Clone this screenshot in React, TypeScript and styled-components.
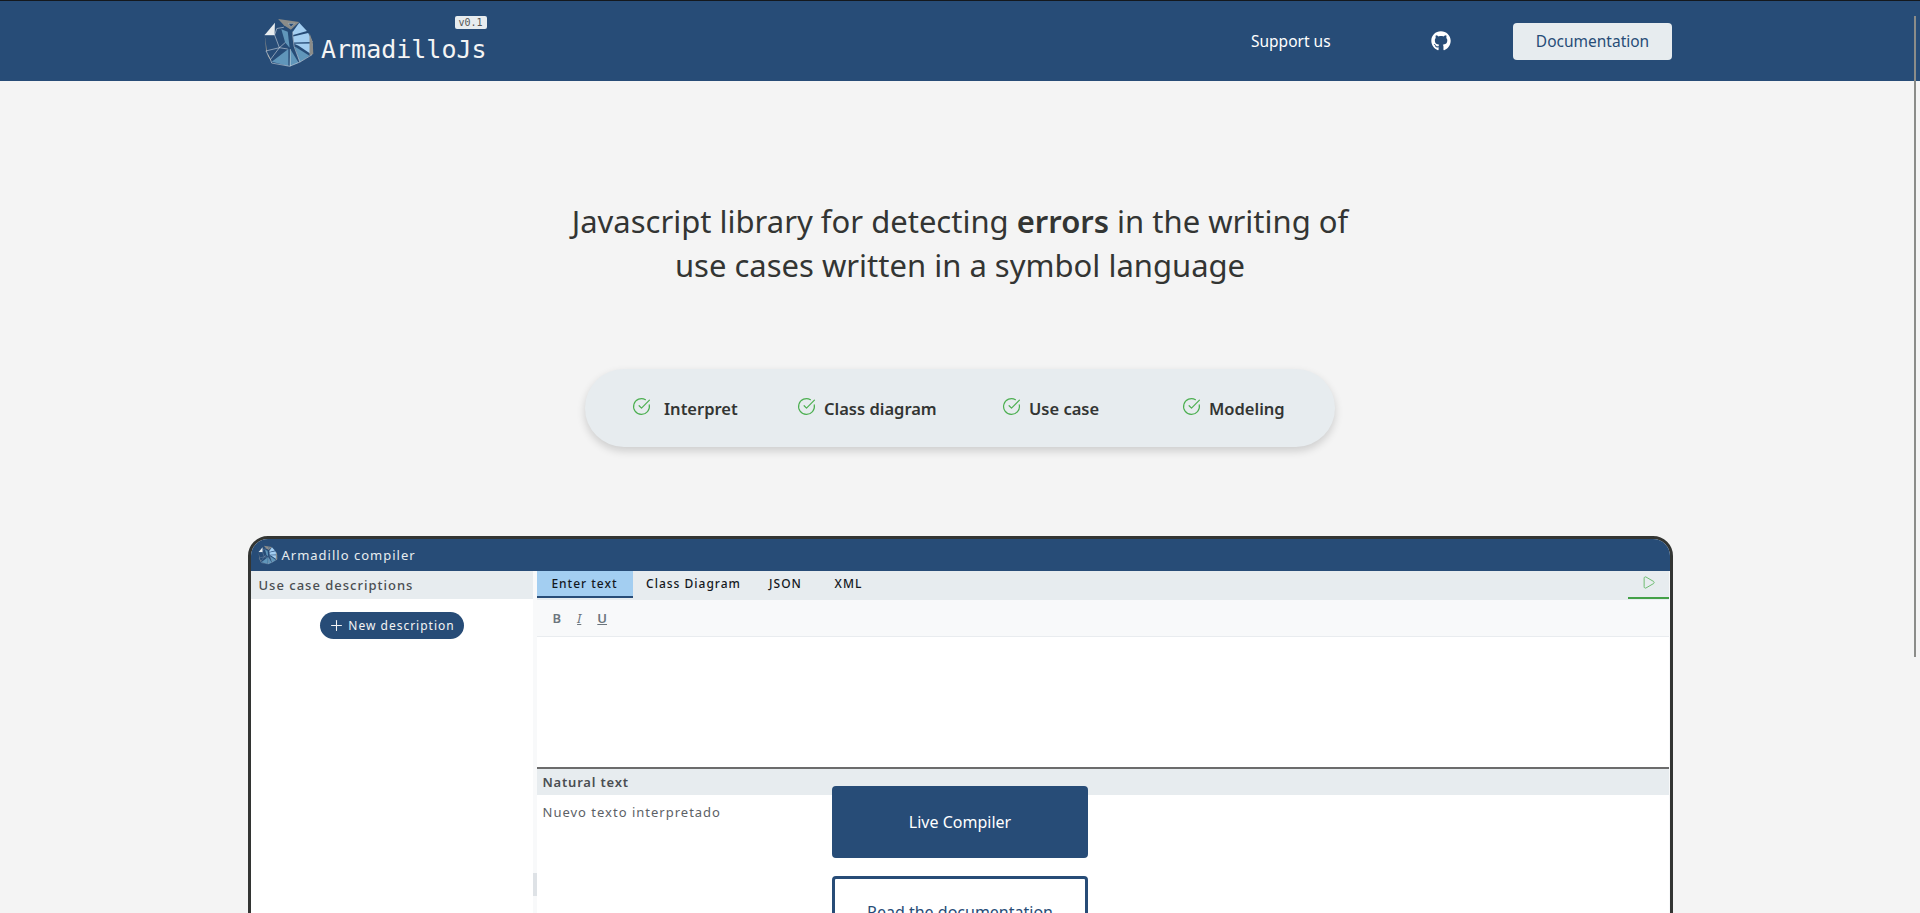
import { CircleCheckBig, Play, Plus } from 'lucide-react';
import { FaGithub } from 'react-icons/fa';
import styled, { createGlobalStyle } from 'styled-components';

const GlobalStyle = createGlobalStyle`
  html, body {
    margin: 0;
    height: 100%;
    overflow: hidden;
    background: #f4f4f4;
    font-family: 'Noto Sans', 'Open Sans', sans-serif;
    color: #333533;
  }
  * { box-sizing: border-box; }
`;

const Header = styled.header`
  height: 81px;
  background: #274c77;
  border-top: 1px solid #14181d;
  display: flex;
  justify-content: center;
`;

const Container = styled.div`
  width: 1424px;
  display: flex;
  align-items: center;
`;

const Brand = styled.div`
  display: flex;
  align-items: flex-end;
  margin-left: 15px;
  position: relative;
  height: 52px;
`;

const BrandName = styled.span`
  font-family: 'DejaVu Sans Mono', monospace;
  font-size: 25px;
  letter-spacing: 0;
  line-height: 30px;
  color: #f4f4f4;
  margin-left: 6px;
  margin-bottom: 2px;
`;

const VersionBadge = styled.span`
  position: absolute;
  right: 0;
  top: 1px;
  width: 32px;
  height: 13px;
  border-radius: 2px;
  background: #e7ecef;
  color: #555;
  font-family: 'DejaVu Sans Mono', monospace;
  font-size: 10px;
  line-height: 13px;
  text-align: center;
`;

const Nav = styled.nav`
  margin-left: auto;
  display: flex;
  align-items: center;
`;

const NavLink = styled.a`
  color: #fff;
  font-size: 15.5px;
  width: 180px;
  margin-top: -1px;
`;

const GithubLink = styled.a`
  color: #fff;
  display: flex;
  width: 82px;
`;

const DocButton = styled.button`
  width: 159px;
  height: 37px;
  border: 0;
  border-radius: 4px;
  background: #e7ecef;
  color: #274c77;
  font: inherit;
  font-size: 15.5px;
`;

const Hero = styled.main`
  display: flex;
  flex-direction: column;
  align-items: center;
  padding-top: 118px;
`;

const Title = styled.h1`
  margin: 0;
  font-size: 31px;
  line-height: 44px;
  font-weight: 400;
  text-align: center;
  color: #333533;
  strong { font-weight: 600; }
`;

const FeaturePill = styled.ul`
  list-style: none;
  margin: 82px 0 0;
  width: 750px;
  height: 78px;
  padding: 0 0 0 47px;
  display: grid;
  grid-template-columns: 165px 205px 180px 1fr;
  align-items: center;
  border-radius: 39px;
  background: #e7ecef;
  box-shadow: 0 4px 8px rgba(0, 0, 0, 0.16);
`;

const Feature = styled.li<{ $gap: number }>`
  display: flex;
  align-items: center;
  gap: ${p => p.$gap}px;
  font-size: 16.5px;
  font-weight: 600;
  svg { color: #4caf50; margin-top: -3px; flex: none; }
`;

const CompilerWindow = styled.section`
  margin-top: 89px;
  width: 1425px;
  height: 560px;
  border: 3px solid #333533;
  border-radius: 20px;
  overflow: hidden;
  background: #fff;
  display: flex;
  flex-direction: column;
`;

const TitleBar = styled.div`
  height: 32px;
  flex: none;
  background: #274c77;
  display: flex;
  align-items: center;
  padding-left: 7px;
  gap: 4px;
  color: #e7ecef;
  font-size: 13px;
  letter-spacing: 1px;
`;

const WindowBody = styled.div`
  flex: 1;
  display: grid;
  grid-template-columns: 282px 4px 1fr 1px;
`;

const SidePanel = styled.aside`
  display: flex;
  flex-direction: column;
  align-items: center;
`;

const SideHeading = styled.div`
  align-self: stretch;
  height: 28px;
  background: #e7ecef;
  padding-left: 8px;
  font-size: 13px;
  line-height: 28px;
  letter-spacing: 1px;
  font-weight: 500;
  color: #4a4e52;
`;

const NewButton = styled.button`
  margin-top: 13px;
  width: 144px;
  height: 27px;
  border: 0;
  border-radius: 14px;
  background: #274c77;
  color: #f4f4f4;
  font: inherit;
  font-size: 12px;
  letter-spacing: 1px;
  display: flex;
  align-items: center;
  justify-content: center;
  gap: 3px;
`;

const Splitter = styled.div`
  background: #f8f9fa;
  position: relative;
`;

const SplitterGrip = styled.div`
  position: absolute;
  left: 0;
  top: 302px;
  width: 4px;
  height: 23px;
  background: #dee2e6;
`;

const EditorPanel = styled.div`
  display: flex;
  flex-direction: column;
`;

const TabBar = styled.div`
  height: 29px;
  background: #e7ecef;
  display: flex;
  position: relative;
`;

const Tab = styled.button<{ $active?: boolean; $width: number }>`
  width: ${p => p.$width}px;
  height: 27px;
  border: 0;
  padding: 0;
  background: ${p => (p.$active ? '#a3cef1' : 'transparent')};
  border-bottom: 2px solid ${p => (p.$active ? '#274c77' : 'transparent')};
  font: inherit;
  font-size: 12px;
  font-weight: 500;
  letter-spacing: 1px;
  color: #14181d;
`;

const RunButton = styled.button`
  position: absolute;
  right: 0;
  top: 0;
  width: 41px;
  height: 28px;
  padding: 0 0 4px;
  border: 0;
  background: transparent;
  border-bottom: 2px solid #43a047;
  color: #4caf50;
  display: flex;
  align-items: center;
  justify-content: center;
`;

const Toolbar = styled.div`
  height: 37px;
  background: #f8f9fa;
  border-bottom: 1px solid #e9ecef;
  display: flex;
  align-items: center;
  padding-left: 16px;
  gap: 16px;
  color: #6c757d;
  font-size: 13px;
`;

const ToolGlyph = styled.span<{ $italic?: boolean; $underline?: boolean }>`
  font-weight: ${p => (p.$italic ? 400 : 600)};
  font-style: ${p => (p.$italic ? 'italic' : 'normal')};
  text-decoration: ${p => (p.$italic || p.$underline ? 'underline' : 'none')};
`;

const TextArea = styled.div`
  height: 132px;
  background: #fff;
  border-bottom: 2px solid #6c6c6c;
`;

const SubHeading = styled.div`
  height: 26px;
  background: #e7ecef;
  padding-left: 6px;
  font-size: 13px;
  font-weight: 600;
  line-height: 26px;
  letter-spacing: 0.8px;
  color: #4a4e52;
`;

const Output = styled.p`
  margin: 0;
  padding: 8px 6px;
  font-size: 13px;
  letter-spacing: 1px;
  color: #5c6166;
`;

const CallToActions = styled.div`
  position: absolute;
  left: 832px;
  top: 786px;
  width: 256px;
  display: flex;
  flex-direction: column;
  gap: 18px;
`;

const Cta = styled.a<{ $outline?: boolean }>`
  height: 72px;
  border-radius: 4px;
  border: 3px solid #274c77;
  background: ${p => (p.$outline ? '#fff' : '#274c77')};
  color: ${p => (p.$outline ? '#274c77' : '#fff')};
  display: flex;
  align-items: center;
  justify-content: center;
  font-size: 16px;
`;

const ScrollThumb = styled.div`
  position: fixed;
  right: 4px;
  top: 16px;
  width: 2px;
  height: 641px;
  background: #8b8c89;
`;

// drawn by hand from the reference, coordinates in a 80x60 crop scaled 3x
const Logo = ({ width }: { width: number }) => (
  <svg width={width} height={width * 0.96} viewBox="35 12 162 156" fill="none">
    <polygon points="82,18 148,28 122,52 100,38" fill="#8b8c89" />
    <polygon points="114,32 133,32 122,43" fill="#274c77" stroke="#e7ecef" strokeWidth="1" />
    <polygon points="40,68 72,30 71,68" fill="#e7ecef" />
    <polygon points="148,30 172,56 129,68 128,58" fill="#a3cef1" />
    <polygon points="129,73 176,62 190,90 132,92" fill="#a3cef1" />
    <polygon points="132,96 190,95 188,130 146,102" fill="#a3cef1" />
    <polygon points="92,50 112,58 118,108 104,92" fill="#6096ba" />
    <polygon points="62,152 114,112 114,165" fill="#6096ba" />
    <polygon points="120,112 146,155 118,166" fill="#6096ba" />
    <polygon points="134,104 180,133 150,153" fill="#6096ba" />
    <polygon points="40,68 44,115 62,152 50,135" fill="#8b8c89" />
    <polygon points="180,62 190,90 192,128 180,133" fill="#8b8c89" />
    <path
      d="M40 68L71 68L86 108L44 118M71 68L78 48L100 44M44 118L58 145L86 108L104 92M86 108L112 112M58 145L62 156L118 166L150 153L188 130M128 58V72L132 104L150 153M120 112V166"
      stroke="#e7ecef"
      strokeWidth="1.6"
    />
  </svg>
);

const features = [
  { label: 'Interpret', gap: 13 },
  { label: 'Class diagram', gap: 8 },
  { label: 'Use case', gap: 8 },
  { label: 'Modeling', gap: 8 },
];

const tabs = [
  { label: 'Enter text', width: 96, active: true },
  { label: 'Class Diagram', width: 122 },
  { label: 'JSON', width: 62 },
  { label: 'XML', width: 64 },
];

export default function App() {
  return (
    <>
      <GlobalStyle />
      <Header>
        <Container>
          <Brand>
            <Logo width={52} />
            <BrandName>ArmadilloJs</BrandName>
            <VersionBadge>v0.1</VersionBadge>
          </Brand>
          <Nav>
            <NavLink>Support us</NavLink>
            <GithubLink>
              <FaGithub size={20} />
            </GithubLink>
            <DocButton>Documentation</DocButton>
          </Nav>
        </Container>
      </Header>
      <Hero>
        <Title>
          Javascript library for detecting <strong>errors</strong> in the writing of
          <br />
          use cases written in a symbol language
        </Title>
        <FeaturePill>
          {features.map(f => (
            <Feature key={f.label} $gap={f.gap}>
              <CircleCheckBig size={19} strokeWidth={1.5} />
              {f.label}
            </Feature>
          ))}
        </FeaturePill>
        <CompilerWindow>
          <TitleBar>
            <Logo width={20} />
            Armadillo compiler
          </TitleBar>
          <WindowBody>
            <SidePanel>
              <SideHeading>Use case descriptions</SideHeading>
              <NewButton>
                <Plus size={17} strokeWidth={1.5} />
                New description
              </NewButton>
            </SidePanel>
            <Splitter>
              <SplitterGrip />
            </Splitter>
            <EditorPanel>
              <TabBar>
                {tabs.map(t => (
                  <Tab key={t.label} $active={t.active} $width={t.width}>
                    {t.label}
                  </Tab>
                ))}
                <RunButton>
                  <Play size={15} strokeWidth={1.25} />
                </RunButton>
              </TabBar>
              <Toolbar>
                <ToolGlyph>B</ToolGlyph>
                <ToolGlyph $italic>I</ToolGlyph>
                <ToolGlyph $underline>U</ToolGlyph>
              </Toolbar>
              <TextArea />
              <SubHeading>Natural text</SubHeading>
              <Output>Nuevo texto interpretado</Output>
            </EditorPanel>
            <Splitter />
          </WindowBody>
        </CompilerWindow>
      </Hero>
      <CallToActions>
        <Cta>Live Compiler</Cta>
        <Cta $outline>Read the documentation</Cta>
      </CallToActions>
      <ScrollThumb />
    </>
  );
}
